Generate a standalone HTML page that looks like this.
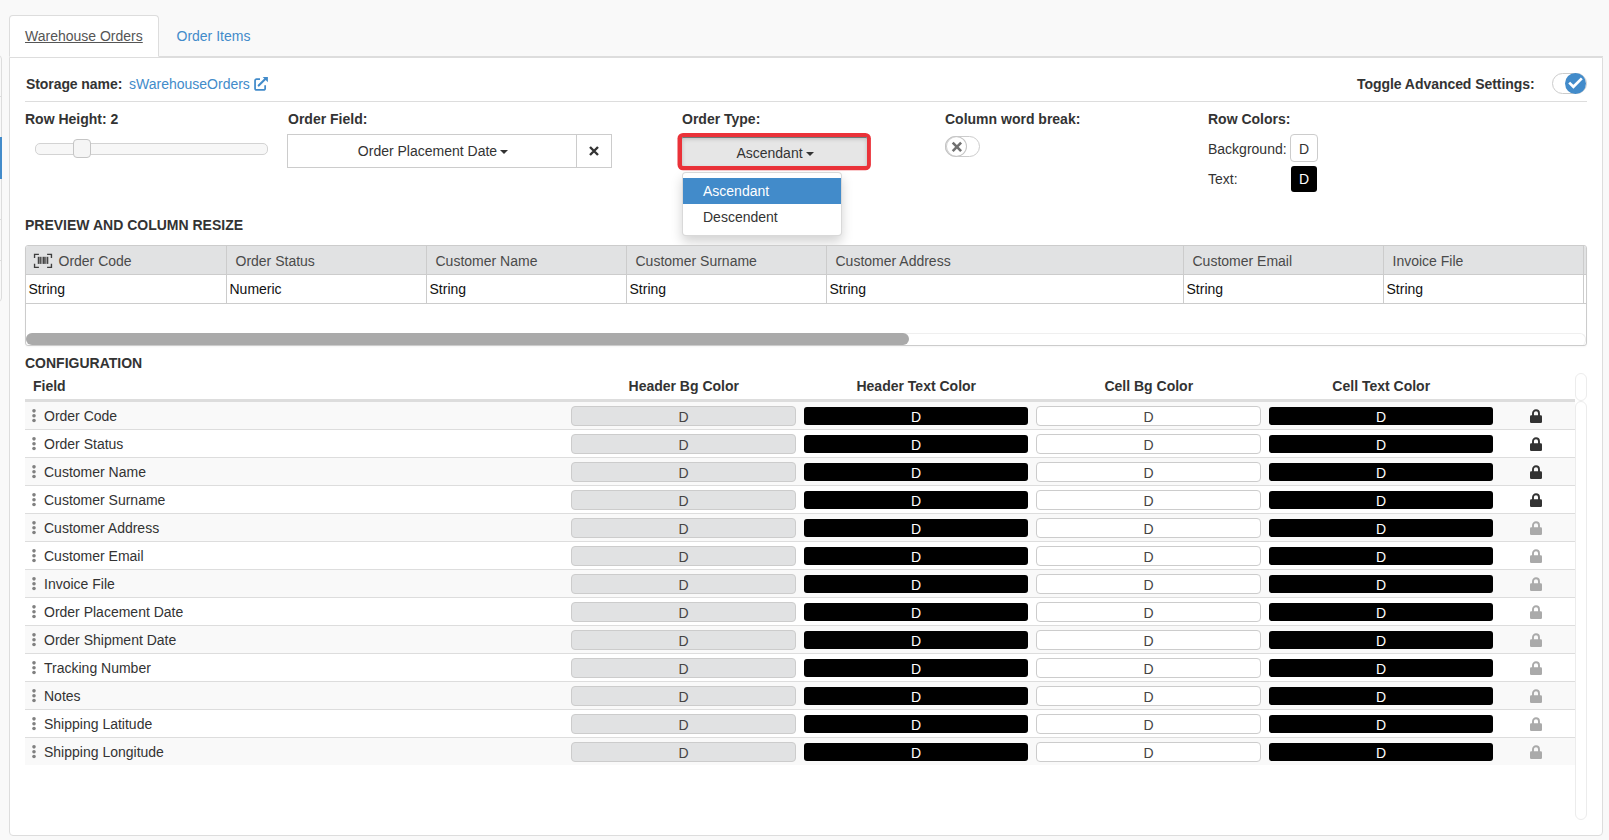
<!DOCTYPE html><html lang="en"><head><meta charset="utf-8"><title>Warehouse Orders</title><style>
*{box-sizing:border-box;margin:0;padding:0}
html,body{width:1609px;height:840px;overflow:hidden}
body{background:#f9f9f9;font-family:"Liberation Sans",Arial,sans-serif;font-size:14px;line-height:20px;color:#333;position:relative}
.abs{position:absolute}
b,.b{font-weight:bold}
a{color:#428bca;text-decoration:none}
.lbl{position:absolute;font-weight:bold;white-space:nowrap;height:20px;line-height:20px}
.txt{position:absolute;white-space:nowrap;height:20px;line-height:20px}
/* left strip */
#ls{position:absolute;left:-3px;top:55px;width:5px;height:247px;border:1px solid #ddd;border-radius:0 4px 4px 0;background:#f9f9f9}
#ls i{position:absolute;left:0;width:4px;height:1px;background:#ddd}
#lsb{position:absolute;left:0;top:137px;width:2px;height:42px;background:#428bca}
/* tabs */
#navline{position:absolute;left:9px;top:56px;width:1594px;height:1px;background:#ddd}
#tab1{position:absolute;left:9px;top:15px;width:150px;height:42px;border:1px solid #ddd;border-bottom-color:transparent;border-radius:4px 4px 0 0;background:#fff;color:#555;padding:10px 15px;text-decoration:underline;white-space:nowrap}
#tab2{position:absolute;left:160.500px;top:15px;height:42px;padding:11px 16px;color:#428bca;white-space:nowrap}
#panel{position:absolute;left:9px;top:57px;width:1594px;height:779px;background:#fff;border:1px solid #ddd;border-radius:0 0 4px 4px}
.hr{position:absolute;left:25px;top:101px;width:1562px;height:1px;background:#ddd}
/* slider */
#strack{position:absolute;left:35px;top:143px;width:233px;height:12px;border:1px solid #d3d3d3;border-radius:5px;background:#f7f7f7}
#sthumb{position:absolute;left:73px;top:139px;width:18px;height:19px;border:1px solid #c5c5c5;border-radius:4px;background:#f5f5f5}
/* buttons */
.btn{position:absolute;border:1px solid #ccc;background:#fff;height:34px;line-height:20px;padding:6px 12px;text-align:center;white-space:nowrap}
.caret{display:inline-block;width:0;height:0;margin-left:3px;vertical-align:middle;border-top:4px solid #333;border-right:4px solid transparent;border-left:4px solid transparent}
#ot-ring{position:absolute;left:678px;top:133px;width:193px;height:37px;border-radius:5px;background:#ea3239}
#ot-btn{position:absolute;left:682px;top:137px;width:185px;height:29px;padding-left:1px;background:#e6e6e6;border-radius:1px;box-shadow:inset 0 2px 4px rgba(0,0,0,.18), inset 0 1px 0 #7f8c8c;text-align:center;line-height:20px;padding-top:6px;white-space:nowrap}
#menu{position:absolute;left:682px;top:172px;width:160px;height:64px;background:#fff;border:1px solid rgba(0,0,0,.15);border-radius:4px;box-shadow:0 6px 12px rgba(0,0,0,.175);padding:5px 0}
#menu div{height:26px;line-height:20px;padding:3px 20px;white-space:nowrap}
#menu .act{background:#428bca;color:#fff}
/* toggles */
.pill{position:absolute;width:35px;height:21px;border:1px solid #ccc;border-radius:11px;background:#fff}
.knob{position:absolute;width:21px;height:21px;border-radius:50%}
/* color btns */
.cb{position:absolute;text-align:center;line-height:20px;white-space:nowrap}
/* grid */
#grid{position:absolute;left:25px;top:245px;width:1562px;height:101px;border:1px solid #ccc;border-radius:3px;background:#fff;overflow:hidden;box-shadow:0 1px 2px rgba(0,0,0,.04)}
#ghead{position:absolute;left:0;top:0;width:1560px;height:28px;background:#e1e2e3}
.gl{position:absolute;height:1px;background:#ccc;left:0;width:1560px}
.gv{position:absolute;width:1px;background:#ccc;top:0;height:58px}
.gh{position:absolute;top:5px;height:20px;line-height:20px;color:#4a4a4a;margin-left:-0.5px;white-space:nowrap}
.gd{position:absolute;margin-left:-0.5px;top:33px;height:20px;line-height:20px;color:#111;white-space:nowrap}
#gtrack{position:absolute;left:0px;top:87px;width:1560px;height:13px;border:1px solid #efefef;border-bottom:0;border-radius:6px;background:#fff}
#gthumb{position:absolute;left:0px;top:87px;width:883px;height:12px;border-radius:6px;background:#aaa}
/* config table */
.th{position:absolute;top:376px;height:20px;line-height:20px;font-weight:bold;white-space:nowrap;text-align:center}
#thb{position:absolute;left:25px;top:399px;width:1550px;height:2px;background:#ddd}
.row{position:absolute;left:25px;width:1550px;height:28px;border-top:1px solid #ddd}
.row.odd{background:#f9f9f9}
.row .dots{position:absolute;left:5.700px;top:6px;width:6px;height:16px;fill:#808080}
.row .nm{position:absolute;left:19px;top:4px;height:20px;line-height:20px;white-space:nowrap}
.row .c{position:absolute;top:4px;width:225px;height:20px;border-radius:4px;text-align:center;line-height:20px}
.c1{left:546px;background:#e1e2e3;border:1px solid #ccc;color:#444}
.c3{left:1011px;background:#fff;border:1px solid #ccc;color:#444}
.row .c2,.row .c4{top:5px;height:18px;width:224px;line-height:20px;background:#000;color:#fff;border-radius:3px}
.c2{left:779px}
.c4{left:1244px}
.lock{position:absolute;left:1505px;width:12px;height:14px}
.vtrack{position:absolute;left:1575px;width:12px;border:1px solid #ececec;border-radius:6px;background:#fff}
</style></head><body>
<div id="ls"><i style="top:40px"></i><i style="top:81px"></i><i style="top:122px"></i><i style="top:163px"></i><i style="top:204px"></i></div><div id="lsb"></div>
<div id="navline"></div>
<div id="panel"></div>
<div id="tab1">Warehouse Orders</div><div id="tab2">Order Items</div>
<div class="lbl" style="left:26px;top:74px;letter-spacing:-0.080px">Storage name:</div>
<a class="txt" style="left:129px;top:74px">sWarehouseOrders</a>
<svg class="abs" style="left:253px;top:76px" width="16" height="16" viewBox="0 0 16 16"><path d="M7 3.150H3.550a1.500 1.500 0 0 0-1.500 1.500V12.450a1.500 1.500 0 0 0 1.500 1.500H10.650a1.500 1.500 0 0 0 1.500-1.500V9.200" fill="none" stroke="#428bca" stroke-width="1.750"/><path d="M5.700 9.600L13.300 2" fill="none" stroke="#428bca" stroke-width="2.100" stroke-linecap="round"/><path d="M9.700 1H14.900V6.200z" fill="#428bca"/></svg>
<div class="lbl" style="left:1357px;top:74px;letter-spacing:-0.050px">Toggle Advanced Settings:</div>
<div class="pill" style="left:1552px;top:73px"></div><div class="knob" style="left:1565px;top:73px;background:#428bca"></div>
<svg class="abs" style="left:1567px;top:75.300px" width="17" height="15" viewBox="0 0 17 15"><path d="M2.200 7.600l4.200 4.200 8.400-8.400" fill="none" stroke="#fff" stroke-width="2.700"/></svg>
<div class="hr"></div>
<div class="lbl" style="left:25px;top:109px">Row Height: 2</div>
<div id="strack"></div><div id="sthumb"></div>
<div class="lbl" style="left:288px;top:109px">Order Field:</div>
<div class="btn" style="left:287px;top:134px;width:290px;padding-left:14px">Order Placement Date<span class="caret"></span></div>
<div class="btn" style="left:576px;top:134px;width:36px"></div>
<svg class="abs" style="left:588px;top:145px" width="12" height="12" viewBox="0 0 12 12"><path d="M2 2l8 8M10 2l-8 8" stroke="#333" stroke-width="2.400" fill="none"/></svg>
<div class="lbl" style="left:682px;top:109px">Order Type:</div>
<svg class="abs" style="left:670px;top:128px" width="210" height="50" viewBox="670 128 210 50"><rect x="677.500" y="133" width="193.400" height="37.300" rx="5.500" fill="#ea3239"/></svg><div id="ot-btn">Ascendant<span class="caret"></span></div>
<div id="menu"><div class="act">Ascendant</div><div>Descendent</div></div>
<div class="lbl" style="left:945px;top:109px">Column word break:</div>
<div class="pill" style="left:945px;top:136px"></div><div class="knob" style="left:945px;top:136px;width:22px;background:#fff;border:1px solid #c4c4c4;box-shadow:inset 1px 0 0 #d0d0d0"></div>
<svg class="abs" style="left:950.500px;top:141px" width="12" height="12" viewBox="0 0 12 12"><path d="M1.700 1.700l8.400 8.400M10.100 1.700l-8.400 8.400" stroke="#707070" stroke-width="2.600" fill="none"/></svg>
<div class="lbl" style="left:1208px;top:109px">Row Colors:</div>
<div class="txt" style="left:1208px;top:139px">Background:</div>
<div class="cb" style="left:1290px;top:134px;width:28px;height:28px;border:1px solid #ccc;border-radius:4px;background:#fff;padding-top:4px">D</div>
<div class="txt" style="left:1208px;top:169px">Text:</div>
<div class="cb" style="left:1291px;top:166px;width:26px;height:26px;border-radius:3px;background:#000;color:#fff;padding-top:3px">D</div>
<div class="lbl" style="left:25px;top:215px">PREVIEW AND COLUMN RESIZE</div>
<div id="grid"><div id="ghead"></div><div class="gl" style="top:28px"></div><div class="gl" style="top:57px"></div><div class="gv" style="left:200px"></div><div class="gv" style="left:400px"></div><div class="gv" style="left:600px"></div><div class="gv" style="left:800px"></div><div class="gv" style="left:1157px"></div><div class="gv" style="left:1357px"></div><div class="gv" style="left:1557px"></div><svg class="abs" style="left:7px;top:7px" width="20" height="16" viewBox="0 0 20 16"><path d="M1.550 5V1.350H5.900M14.100 1.350H18.450V5M18.450 10.700V14.350H14.100M5.900 14.350H1.550V10.700" fill="none" stroke="#3d3d3d" stroke-width="1.350"/><g fill="#444"><rect x="4.750" y="3.800" width="1.850" height="7.100"/><rect x="7.100" y="3.800" width="0.900" height="7.100"/><rect x="8.500" y="3.800" width="0.900" height="7.100"/><rect x="9.900" y="3.800" width="1.900" height="7.100"/><rect x="12.300" y="3.800" width="0.900" height="7.100"/><rect x="13.700" y="3.800" width="1.600" height="7.100"/></g></svg><div class="gh" style="left:33px">Order Code</div><div class="gh" style="left:210px">Order Status</div><div class="gh" style="left:410px">Customer Name</div><div class="gh" style="left:610px">Customer Surname</div><div class="gh" style="left:810px">Customer Address</div><div class="gh" style="left:1167px">Customer Email</div><div class="gh" style="left:1367px">Invoice File</div><div class="gd" style="left:3px">String</div><div class="gd" style="left:204px">Numeric</div><div class="gd" style="left:404px">String</div><div class="gd" style="left:604px">String</div><div class="gd" style="left:804px">String</div><div class="gd" style="left:1161px">String</div><div class="gd" style="left:1361px">String</div><div id="gtrack"></div><div id="gthumb"></div></div>
<div class="lbl" style="left:25px;top:353px">CONFIGURATION</div>
<div class="th" style="left:33px;text-align:left">Field</div>
<div class="th" style="left:567.5px;width:232.500px">Header Bg Color</div>
<div class="th" style="left:800px;width:232.500px">Header Text Color</div>
<div class="th" style="left:1032.5px;width:232.500px">Cell Bg Color</div>
<div class="th" style="left:1265px;width:232.500px">Cell Text Color</div>
<div id="thb"></div>
<div class="row odd" style="top:401px"><svg class="dots" viewBox="0 0 6 16"><circle cx="3" cy="2.850" r="1.800"/><circle cx="3" cy="7.700" r="1.800"/><circle cx="3" cy="12.550" r="1.800"/></svg><span class="nm">Order Code</span><span class="c c1">D</span><span class="c c2">D</span><span class="c c3">D</span><span class="c c4">D</span><svg class="lock" style="top:7px" viewBox="0 0 12 14"><path d="M3 7V4.200a3 3 0 0 1 6 0V7" fill="none" stroke="#333" stroke-width="1.900"/><rect x="0" y="6.200" width="12" height="7.800" rx="1.200" fill="#333"/></svg></div>
<div class="row" style="top:429px"><svg class="dots" viewBox="0 0 6 16"><circle cx="3" cy="2.850" r="1.800"/><circle cx="3" cy="7.700" r="1.800"/><circle cx="3" cy="12.550" r="1.800"/></svg><span class="nm">Order Status</span><span class="c c1">D</span><span class="c c2">D</span><span class="c c3">D</span><span class="c c4">D</span><svg class="lock" style="top:7px" viewBox="0 0 12 14"><path d="M3 7V4.200a3 3 0 0 1 6 0V7" fill="none" stroke="#333" stroke-width="1.900"/><rect x="0" y="6.200" width="12" height="7.800" rx="1.200" fill="#333"/></svg></div>
<div class="row odd" style="top:457px"><svg class="dots" viewBox="0 0 6 16"><circle cx="3" cy="2.850" r="1.800"/><circle cx="3" cy="7.700" r="1.800"/><circle cx="3" cy="12.550" r="1.800"/></svg><span class="nm">Customer Name</span><span class="c c1">D</span><span class="c c2">D</span><span class="c c3">D</span><span class="c c4">D</span><svg class="lock" style="top:7px" viewBox="0 0 12 14"><path d="M3 7V4.200a3 3 0 0 1 6 0V7" fill="none" stroke="#333" stroke-width="1.900"/><rect x="0" y="6.200" width="12" height="7.800" rx="1.200" fill="#333"/></svg></div>
<div class="row" style="top:485px"><svg class="dots" viewBox="0 0 6 16"><circle cx="3" cy="2.850" r="1.800"/><circle cx="3" cy="7.700" r="1.800"/><circle cx="3" cy="12.550" r="1.800"/></svg><span class="nm">Customer Surname</span><span class="c c1">D</span><span class="c c2">D</span><span class="c c3">D</span><span class="c c4">D</span><svg class="lock" style="top:7px" viewBox="0 0 12 14"><path d="M3 7V4.200a3 3 0 0 1 6 0V7" fill="none" stroke="#333" stroke-width="1.900"/><rect x="0" y="6.200" width="12" height="7.800" rx="1.200" fill="#333"/></svg></div>
<div class="row odd" style="top:513px"><svg class="dots" viewBox="0 0 6 16"><circle cx="3" cy="2.850" r="1.800"/><circle cx="3" cy="7.700" r="1.800"/><circle cx="3" cy="12.550" r="1.800"/></svg><span class="nm">Customer Address</span><span class="c c1">D</span><span class="c c2">D</span><span class="c c3">D</span><span class="c c4">D</span><svg class="lock" style="top:7px" viewBox="0 0 12 14"><path d="M3 7V4.200a3 3 0 0 1 6 0V7" fill="none" stroke="#aaa" stroke-width="1.900"/><rect x="0" y="6.200" width="12" height="7.800" rx="1.200" fill="#aaa"/></svg></div>
<div class="row" style="top:541px"><svg class="dots" viewBox="0 0 6 16"><circle cx="3" cy="2.850" r="1.800"/><circle cx="3" cy="7.700" r="1.800"/><circle cx="3" cy="12.550" r="1.800"/></svg><span class="nm">Customer Email</span><span class="c c1">D</span><span class="c c2">D</span><span class="c c3">D</span><span class="c c4">D</span><svg class="lock" style="top:7px" viewBox="0 0 12 14"><path d="M3 7V4.200a3 3 0 0 1 6 0V7" fill="none" stroke="#aaa" stroke-width="1.900"/><rect x="0" y="6.200" width="12" height="7.800" rx="1.200" fill="#aaa"/></svg></div>
<div class="row odd" style="top:569px"><svg class="dots" viewBox="0 0 6 16"><circle cx="3" cy="2.850" r="1.800"/><circle cx="3" cy="7.700" r="1.800"/><circle cx="3" cy="12.550" r="1.800"/></svg><span class="nm">Invoice File</span><span class="c c1">D</span><span class="c c2">D</span><span class="c c3">D</span><span class="c c4">D</span><svg class="lock" style="top:7px" viewBox="0 0 12 14"><path d="M3 7V4.200a3 3 0 0 1 6 0V7" fill="none" stroke="#aaa" stroke-width="1.900"/><rect x="0" y="6.200" width="12" height="7.800" rx="1.200" fill="#aaa"/></svg></div>
<div class="row" style="top:597px"><svg class="dots" viewBox="0 0 6 16"><circle cx="3" cy="2.850" r="1.800"/><circle cx="3" cy="7.700" r="1.800"/><circle cx="3" cy="12.550" r="1.800"/></svg><span class="nm">Order Placement Date</span><span class="c c1">D</span><span class="c c2">D</span><span class="c c3">D</span><span class="c c4">D</span><svg class="lock" style="top:7px" viewBox="0 0 12 14"><path d="M3 7V4.200a3 3 0 0 1 6 0V7" fill="none" stroke="#aaa" stroke-width="1.900"/><rect x="0" y="6.200" width="12" height="7.800" rx="1.200" fill="#aaa"/></svg></div>
<div class="row odd" style="top:625px"><svg class="dots" viewBox="0 0 6 16"><circle cx="3" cy="2.850" r="1.800"/><circle cx="3" cy="7.700" r="1.800"/><circle cx="3" cy="12.550" r="1.800"/></svg><span class="nm">Order Shipment Date</span><span class="c c1">D</span><span class="c c2">D</span><span class="c c3">D</span><span class="c c4">D</span><svg class="lock" style="top:7px" viewBox="0 0 12 14"><path d="M3 7V4.200a3 3 0 0 1 6 0V7" fill="none" stroke="#aaa" stroke-width="1.900"/><rect x="0" y="6.200" width="12" height="7.800" rx="1.200" fill="#aaa"/></svg></div>
<div class="row" style="top:653px"><svg class="dots" viewBox="0 0 6 16"><circle cx="3" cy="2.850" r="1.800"/><circle cx="3" cy="7.700" r="1.800"/><circle cx="3" cy="12.550" r="1.800"/></svg><span class="nm">Tracking Number</span><span class="c c1">D</span><span class="c c2">D</span><span class="c c3">D</span><span class="c c4">D</span><svg class="lock" style="top:7px" viewBox="0 0 12 14"><path d="M3 7V4.200a3 3 0 0 1 6 0V7" fill="none" stroke="#aaa" stroke-width="1.900"/><rect x="0" y="6.200" width="12" height="7.800" rx="1.200" fill="#aaa"/></svg></div>
<div class="row odd" style="top:681px"><svg class="dots" viewBox="0 0 6 16"><circle cx="3" cy="2.850" r="1.800"/><circle cx="3" cy="7.700" r="1.800"/><circle cx="3" cy="12.550" r="1.800"/></svg><span class="nm">Notes</span><span class="c c1">D</span><span class="c c2">D</span><span class="c c3">D</span><span class="c c4">D</span><svg class="lock" style="top:7px" viewBox="0 0 12 14"><path d="M3 7V4.200a3 3 0 0 1 6 0V7" fill="none" stroke="#aaa" stroke-width="1.900"/><rect x="0" y="6.200" width="12" height="7.800" rx="1.200" fill="#aaa"/></svg></div>
<div class="row" style="top:709px"><svg class="dots" viewBox="0 0 6 16"><circle cx="3" cy="2.850" r="1.800"/><circle cx="3" cy="7.700" r="1.800"/><circle cx="3" cy="12.550" r="1.800"/></svg><span class="nm">Shipping Latitude</span><span class="c c1">D</span><span class="c c2">D</span><span class="c c3">D</span><span class="c c4">D</span><svg class="lock" style="top:7px" viewBox="0 0 12 14"><path d="M3 7V4.200a3 3 0 0 1 6 0V7" fill="none" stroke="#aaa" stroke-width="1.900"/><rect x="0" y="6.200" width="12" height="7.800" rx="1.200" fill="#aaa"/></svg></div>
<div class="row odd" style="top:737px"><svg class="dots" viewBox="0 0 6 16"><circle cx="3" cy="2.850" r="1.800"/><circle cx="3" cy="7.700" r="1.800"/><circle cx="3" cy="12.550" r="1.800"/></svg><span class="nm">Shipping Longitude</span><span class="c c1">D</span><span class="c c2">D</span><span class="c c3">D</span><span class="c c4">D</span><svg class="lock" style="top:7px" viewBox="0 0 12 14"><path d="M3 7V4.200a3 3 0 0 1 6 0V7" fill="none" stroke="#aaa" stroke-width="1.900"/><rect x="0" y="6.200" width="12" height="7.800" rx="1.200" fill="#aaa"/></svg></div>
<div class="vtrack" style="top:373px;height:28px"></div><div class="vtrack" style="top:401px;height:419px"></div>
</body></html>
